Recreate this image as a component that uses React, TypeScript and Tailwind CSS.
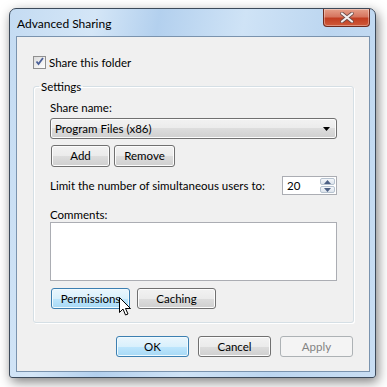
import { type ReactNode } from "react";

const btn =
  "flex items-center justify-center rounded-[3px] border border-[#707070] bg-[linear-gradient(#f2f2f2_0%,#ebebeb_50%,#dddddd_50%,#cfcfcf_100%)] shadow-[inset_0_0_0_1px_#fcfcfc] text-black";
const btnBlue =
  "flex items-center justify-center rounded-[3px] border border-[#3c7fb1] bg-[linear-gradient(#eaf6fd_0%,#d9f0fc_50%,#bee6fd_50%,#a7d9f5_100%)] shadow-[inset_0_0_0_1px_#f0fafe] text-black";

function Button({ children, blue, className }: { children: ReactNode; blue?: boolean; className: string }) {
  return <div className={`${blue ? btnBlue : btn} ${className}`}>{children}</div>;
}

function CheckBox() {
  return (
    <div className="w-[13px] h-[13px] border border-[#8f8f8f] bg-[linear-gradient(135deg,#dcdcdc,#ffffff)] p-[2px]">
      <svg viewBox="0 0 9 9" className="w-[9px] h-[9px] -mt-[2px] -ml-[1px]">
        <path d="M1.5 4.5 L3.5 7 L8 1" fill="none" stroke="#4a5f97" strokeWidth="1.8" />
      </svg>
    </div>
  );
}

export default function App() {
  return (
    <div className="w-[387px] h-[387px] bg-white pl-[9px] pt-[8px] overflow-hidden font-['Lato','Liberation_Sans',sans-serif] text-[11.5px] text-black">
      {/* Window frame */}
      <div className="relative w-[367px] h-[370px] rounded-t-[7px] rounded-b-[3px] border border-[#3c4a5a] bg-[linear-gradient(100deg,#c4dbf2_0%,#d4e6f7_20%,#b3d0ee_35%,#cfe3f6_55%,#bcd6f0_75%,#c9def3_100%)] pl-[6px] pr-[5px] pb-[5px] shadow-[2px_4px_12px_rgba(0,0,0,0.5)]">
        {/* Title bar */}
        <div className="h-[27px] flex items-start justify-between">
          <span className="pl-[1px] pt-[7px] text-[12px] leading-[15px]">Advanced Sharing</span>
          <div className="w-[47px] h-[18px] rounded-b-[4px] border border-[#6e2a1e] border-t-0 bg-[linear-gradient(#e6a08a_0%,#d67660_45%,#c23e22_55%,#cf5a3a_100%)] flex items-center justify-center shadow-[inset_0_0_0_1px_rgba(255,255,255,0.35)]">
            <svg viewBox="0 0 14 11" className="w-[14px] h-[11px]">
              <path d="M2 1.5 L12 9.5 M12 1.5 L2 9.5" stroke="#6a4a46" strokeWidth="3.6" strokeLinecap="round" />
              <path d="M2 1.5 L12 9.5 M12 1.5 L2 9.5" stroke="#f4eeee" strokeWidth="2.2" strokeLinecap="round" />
            </svg>
          </div>
        </div>

        {/* Client area */}
        <div className="relative w-[354px] h-[336px] border border-[#7a93ae] bg-[#f0f0f0] pl-[16px] pr-[16px]">
          <div className="mt-[19px] h-[13px] flex items-center gap-[3px]">
            <CheckBox />
            <span className="leading-[15px]">Share this folder</span>
          </div>

          <fieldset className="mt-[10px] w-[321px] h-[244px] rounded-[3px] border border-[#d5dfe5] shadow-[inset_1px_1px_0_#ffffff,1px_1px_0_#ffffff] pl-[16px] pr-[15px]">
            <legend className="-ml-[11px] px-[2px] leading-[15px]">Settings</legend>
            <div className="mt-[6px] leading-[15px]">Share name:</div>
            <div className="mt-[3px] w-[287px] h-[21px] rounded-[3px] border border-[#707070] bg-[linear-gradient(#f2f2f2_0%,#ebebeb_50%,#dddddd_50%,#cfcfcf_100%)] shadow-[inset_0_0_0_1px_#fcfcfc] flex items-center justify-between pl-[4px] pr-[6px]">
              <span>Program Files (x86)</span>
              <svg viewBox="0 0 7 4" className="w-[7px] h-[4px]">
                <path d="M0 0 H7 L3.5 4 Z" fill="#000" />
              </svg>
            </div>
            <div className="mt-[6px] ml-[1px] flex gap-[4px]">
              <Button className="w-[59px] h-[22px]">Add</Button>
              <Button className="w-[61px] h-[22px]">Remove</Button>
            </div>
            <div className="mt-[9px] flex items-center justify-between w-[287px] h-[19px]">
              <span>Limit the number of simultaneous users to:</span>
              <div className="w-[55px] h-[19px] flex border border-[#abadb3] bg-white">
                <span className="flex-1 pl-[4px] leading-[17px]">20</span>
                <div className="w-[17px] flex flex-col gap-[1px] p-[1px]">
                  <div className="flex-1 flex items-center justify-center rounded-[2px] border border-[#b7c3d0] bg-[linear-gradient(#f4f7fb,#dde4ec)]">
                    <svg viewBox="0 0 7 4" className="w-[7px] h-[4px]">
                      <path d="M0 4 H7 L3.5 0 Z" fill="#4d6185" />
                    </svg>
                  </div>
                  <div className="flex-1 flex items-center justify-center rounded-[2px] border border-[#b7c3d0] bg-[linear-gradient(#f4f7fb,#dde4ec)]">
                    <svg viewBox="0 0 7 4" className="w-[7px] h-[4px]">
                      <path d="M0 0 H7 L3.5 4 Z" fill="#4d6185" />
                    </svg>
                  </div>
                </div>
              </div>
            </div>
            <div className="mt-[13px] leading-[14px]">Comments:</div>
            <div className="w-[287px] h-[59px] border border-[#abadb3] bg-white" />
            <div className="mt-[7px] ml-[1px] flex gap-[7px]">
              <Button blue className="w-[79px] h-[21px]">Permissions</Button>
              <Button className="w-[79px] h-[21px]">Caching</Button>
            </div>
          </fieldset>

          <div className="mt-[13px] flex justify-end gap-[9px]">
            <Button blue className="w-[73px] h-[21px]">OK</Button>
            <Button className="w-[73px] h-[21px]">Cancel</Button>
            <div className="w-[73px] h-[21px] rounded-[3px] border border-[#adb2b5] bg-[#f4f4f4] text-[#838383] flex items-center justify-center">
              Apply
            </div>
          </div>

          {/* Mouse cursor */}
          <svg viewBox="0 0 12 19" className="absolute left-[102px] top-[260px] w-[12px] h-[19px]">
            <path
              d="M0.5 0.5 V15.5 L4 12 L6.5 18 L9 17 L6.5 11.5 H11.5 Z"
              fill="#ffffff"
              stroke="#000000"
              strokeWidth="1"
            />
          </svg>
        </div>
      </div>
    </div>
  );
}
